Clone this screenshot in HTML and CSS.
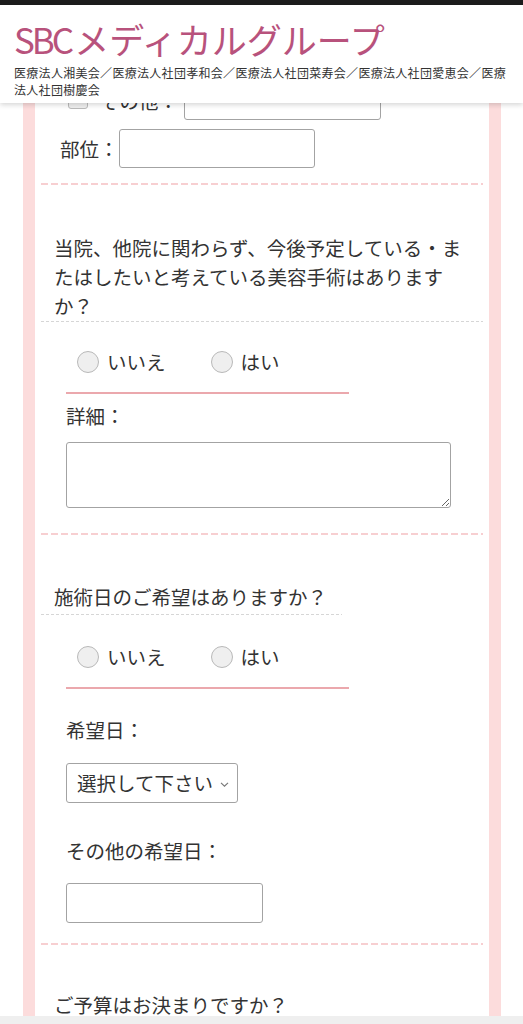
FILE: index.html
```html
<!DOCTYPE html>
<html lang="ja">
<head>
<meta charset="utf-8">
<title>SBCメディカルグループ</title>
<link rel="stylesheet" href="styles.css">
</head>
<body>
<div class="statusbar"></div>
<header class="site-header">
  <div class="logo"><span class="latin">SBC</span>メディカルグループ</div>
  <div class="corp">医療法人湘美会／医療法人社団孝和会／医療法人社団菜寿会／医療法人社団愛恵会／医療法人社団樹慶会</div>
</header>
<main class="frame">
  <div class="row-other">
    <span class="checkbox"></span>
    <span class="lbl">その他：</span>
    <input class="field field-other" type="text">
  </div>
  <div class="row-part">
    <span class="lbl">部位：</span>
    <input class="field field-part" type="text">
  </div>
  <div class="sep"></div>

  <section class="block q1">
    <p class="question">当院、他院に関わらず、今後予定している・またはしたいと考えている美容手術はありますか？</p>
    <div class="radios">
      <label class="radio"><span class="dot"></span>いいえ</label>
      <label class="radio"><span class="dot"></span>はい</label>
    </div>
    <div class="underline"></div>
    <div class="sublabel detail-label">詳細：</div>
    <textarea class="field detail"></textarea>
  </section>
  <div class="sep sep2"></div>

  <section class="block q2">
    <p class="question short">施術日のご希望はありますか？</p>
    <div class="radios">
      <label class="radio"><span class="dot"></span>いいえ</label>
      <label class="radio"><span class="dot"></span>はい</label>
    </div>
    <div class="underline"></div>
    <div class="sublabel date-label">希望日：</div>
    <div class="select">
      <span>選択して下さい</span>
      <svg class="chev" width="9" height="5" viewBox="0 0 9 5"><path d="M1 0.8 L4.5 4.2 L8 0.8" fill="none" stroke="#777" stroke-width="1.1"/></svg>
    </div>
    <div class="sublabel other-label">その他の希望日：</div>
    <input class="field field-date" type="text">
  </section>
  <div class="sep sep3"></div>

  <section class="block q3">
    <p class="question plain">ご予算はお決まりですか？</p>
  </section>
</main>
<div class="navbar"></div>
</body>
</html>
```

FILE: styles.css
```css
* { box-sizing: border-box; }
html, body { margin: 0; padding: 0; }
body {
  background: #ffffff;
  font-family: "Noto Sans CJK JP", "Noto Sans", sans-serif;
  color: #333333;
  height: 1024px;
  overflow: hidden;
  position: relative;
}
.statusbar { height: 5px; background: #1c1c1c; }

.site-header {
  position: absolute;
  top: 5px; left: 0; right: 0;
  height: 98px;
  background: #ffffff;
  padding: 14px 12px 0 14px;
  box-shadow: 0 2px 5px rgba(0,0,0,0.16);
  z-index: 5;
}
.logo {
  font-size: 35px;
  line-height: 40px;
  color: #b8527c;
  white-space: nowrap;
}
.logo .latin { letter-spacing: -3px; margin-right: 3px; }
.corp {
  margin-top: 5px;
  font-size: 12px;
  line-height: 17px;
  letter-spacing: 0.3px;
  color: #333;
}

.frame {
  margin: 0 22px 0 23px;
  border-left: 12px solid #fcdcdc;
  border-right: 12px solid #fcdcdc;
  padding: 0 6px;
  height: 1011px;
  overflow: hidden;
  font-size: 19.5px;
}

.row-other {
  margin-top: 75px;
  height: 40px;
  display: flex;
  align-items: center;
  padding-left: 27px;
}
.checkbox {
  width: 20px; height: 18px;
  border: 1px solid #bbb;
  border-radius: 3px;
  background: #f0f0f0;
}
.row-other .lbl { margin-left: 12px; width: 84px; }
.field {
  display: block;
  border: 1px solid #a3a3a3;
  border-radius: 3px;
  background: #fff;
  margin: 0;
  padding: 0;
  font: inherit;
  outline: none;
}
.field-other { width: 197px; height: 40px; }
.row-part {
  margin-top: 9px;
  display: flex;
  align-items: center;
  padding-left: 19px;
}
.row-part .lbl { width: 59px; }
.field-part { width: 196px; height: 39px; }

.sep {
  height: 2px;
  margin-top: 15px;
  background: repeating-linear-gradient(90deg, #f7cfd1 0 7px, transparent 7px 10px);
}
.sep2 { margin-top: 25px; }
.sep3 { margin-top: 20px; }

.question {
  margin: 0;
  padding: 48px 10px 2px 13px;
  line-height: 29px;
  background-image: repeating-linear-gradient(90deg, #d6d6d6 0 3px, transparent 3px 5px);
  background-size: 100% 1px;
  background-repeat: no-repeat;
  background-position: bottom left;
}
.question.short {
  padding-top: 47px;
  padding-bottom: 4px;
  width: 301px;
  padding-right: 0;
}
.question.plain {
  padding-top: 46px;
  background: none;
  line-height: 28px;
}

.radios {
  margin-top: 25px;
  height: 30px;
  display: flex;
  align-items: center;
  padding-left: 36px;
}
.q2 .radios { margin-top: 27px; }
.radio {
  display: flex;
  align-items: center;
  gap: 8px;
  line-height: 30px;
}
.radio + .radio { margin-left: 45px; }
.dot {
  width: 22px; height: 22px;
  border-radius: 50%;
  border: 1px solid #b9b9b9;
  background: #efefef;
}
.underline {
  margin: 15px 0 0 25px;
  width: 283px;
  height: 2px;
  background: #eba8ad;
}
.sublabel {
  padding-left: 25px;
  line-height: 28px;
}
.detail-label { margin-top: 8px; }
.detail {
  margin: 12px 0 0 25px;
  width: 385px;
  height: 66px;
  resize: vertical;
}
.date-label { margin-top: 27px; }
.select {
  margin: 19px 0 0 25px;
  width: 172px;
  height: 40px;
  border: 1px solid #a3a3a3;
  border-radius: 3px;
  display: flex;
  align-items: center;
  justify-content: space-between;
  padding: 0 8px 0 10px;
  line-height: 1;
}
.chev { display: block; margin-top: 2px; }
.other-label { margin-top: 34px; }
.field-date {
  margin: 18px 0 0 25px;
  width: 197px;
  height: 40px;
}

.navbar {
  position: absolute;
  left: 0; right: 0; bottom: 0;
  height: 8px;
  background: #efefef;
  z-index: 6;
}
```
